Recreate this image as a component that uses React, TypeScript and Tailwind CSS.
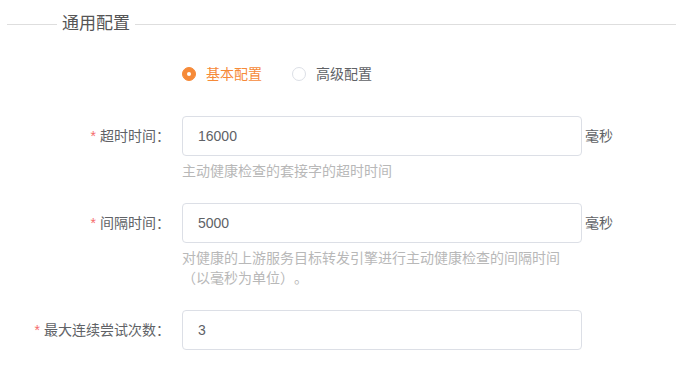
import React, { useState } from "react";

type Field = {
  label: string;
  value: string;
  unit?: string;
  help?: string;
};

const fields: Field[] = [
  {
    label: "超时时间：",
    value: "16000",
    unit: "毫秒",
    help: "主动健康检查的套接字的超时时间",
  },
  {
    label: "间隔时间：",
    value: "5000",
    unit: "毫秒",
    help: "对健康的上游服务目标转发引擎进行主动健康检查的间隔时间（以毫秒为单位）。",
  },
  {
    label: "最大连续尝试次数：",
    value: "3",
  },
];

function Radio({
  label,
  checked,
  onClick,
}: {
  label: string;
  checked: boolean;
  onClick: () => void;
}) {
  return (
    <label
      onClick={onClick}
      className="flex items-center cursor-pointer mr-[30px]"
    >
      {checked ? (
        <span className="w-[14px] h-[14px] rounded-full bg-[#f68a38] border border-[#f68a38] flex items-center justify-center">
          <span className="w-[4px] h-[4px] rounded-full bg-white" />
        </span>
      ) : (
        <span className="w-[14px] h-[14px] rounded-full bg-white border border-[#dcdfe6]" />
      )}
      <span
        className={`pl-[10px] text-sm ${
          checked ? "text-[#f68a38]" : "text-[#606266]"
        }`}
      >
        {label}
      </span>
    </label>
  );
}

export default function App() {
  const [mode, setMode] = useState("basic");
  const [values, setValues] = useState(fields.map((f) => f.value));

  return (
    <div
      className="w-full bg-white px-[7px] pt-[12px] [text-spacing-trim:space-all]"
      style={{ fontFamily: '"Liberation Sans", "Noto Sans CJK SC", sans-serif' }}
    >
      {/* fieldset title */}
      <div className="flex items-center h-6">
        <div className="w-[50px] h-px bg-[#dedede]" />
        <span className="px-[5px] text-[17px] leading-6 text-[#555]">
          通用配置
        </span>
        <div className="flex-1 h-px bg-[#dedede]" />
      </div>

      <div className="mt-[18px]">
        <div className="flex mb-[22px]">
          <div className="w-[175px] shrink-0" />
          <div className="h-10 flex items-center">
            <Radio
              label="基本配置"
              checked={mode === "basic"}
              onClick={() => setMode("basic")}
            />
            <Radio
              label="高级配置"
              checked={mode === "advanced"}
              onClick={() => setMode("advanced")}
            />
          </div>
        </div>

        {fields.map((field, i) => (
          <div key={field.label} className="flex mb-[22px]">
            <label className="w-[175px] shrink-0 pr-3 text-right text-sm leading-10 text-[#606266]">
              <span className="text-[#f56c6c] mr-1">*</span>
              {field.label}
            </label>
            <div className="w-[400px]">
              <div className="flex items-center">
                <input
                  type="text"
                  value={values[i]}
                  onChange={(e) => {
                    const next = [...values];
                    next[i] = e.target.value;
                    setValues(next);
                  }}
                  className="w-[400px] shrink-0 h-10 px-[15px] border border-[#dcdfe6] rounded bg-white text-sm text-[#606266] outline-none focus:border-[#f68a38]"
                />
                {field.unit && (
                  <span className="ml-[3px] text-sm text-[#606266] whitespace-nowrap">
                    {field.unit}
                  </span>
                )}
              </div>
              {field.help && (
                <div className="mt-[5px] text-sm leading-5 text-[#b8b8b8]">
                  {field.help}
                </div>
              )}
            </div>
          </div>
        ))}
      </div>
    </div>
  );
}
